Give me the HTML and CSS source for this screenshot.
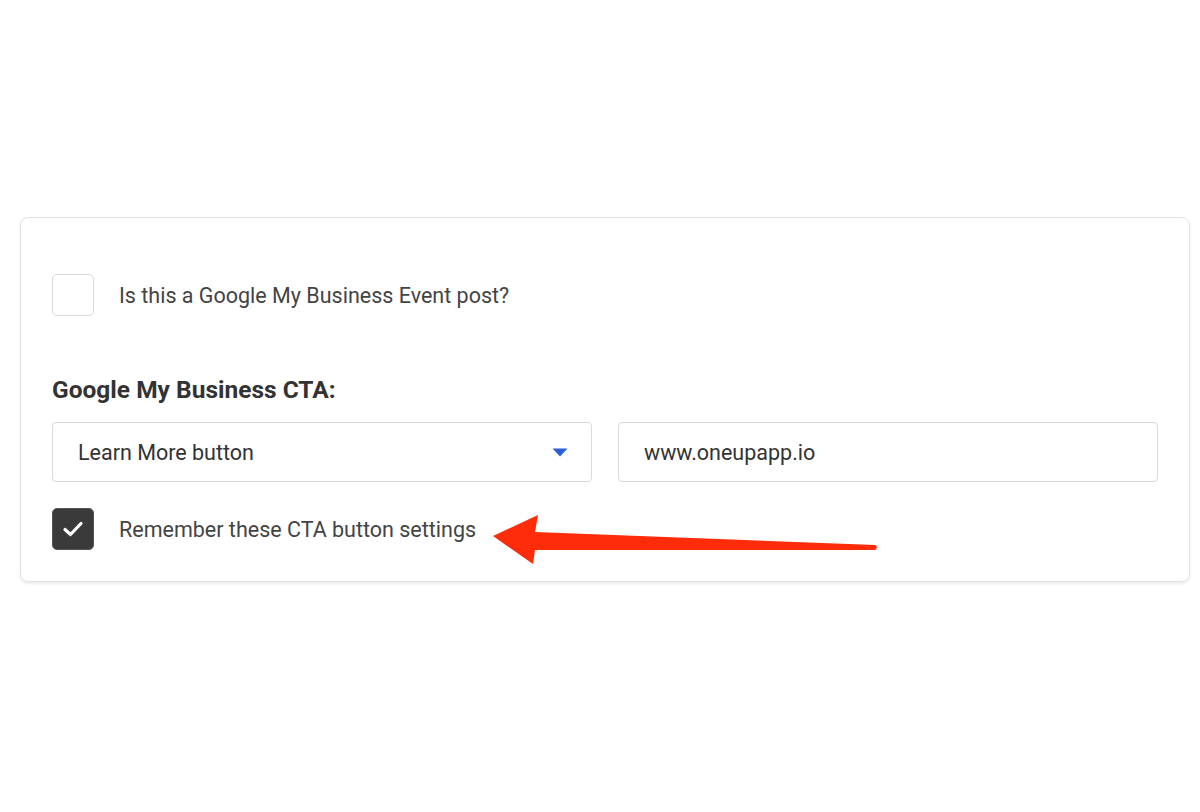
FILE: index.html
```html
<!DOCTYPE html>
<html>
<head>
<meta charset="utf-8">
<link rel="stylesheet" href="styles.css">
</head>
<body>
<div class="page">
  <div class="card">
    <label class="check-row first">
      <span class="box"></span>
      <span class="check-label">Is this a Google My Business Event post?</span>
    </label>
    <h2 class="heading">Google My Business CTA:</h2>
    <div class="fields">
      <div class="field select">
        <span>Learn More button</span>
        <svg class="caret" width="16" height="9" viewBox="0 0 16 9"><path d="M0.5 0.5 H15.5 L8 8.5 Z" fill="#2b5fd9"/></svg>
      </div>
      <div class="field input"><span>www.oneupapp.io</span></div>
    </div>
    <label class="check-row">
      <span class="box checked">
        <svg width="22" height="18" viewBox="0 0 22 18"><path d="M3 9.5 L8.5 14.5 L19 3.5" fill="none" stroke="#fff" stroke-width="3.2" stroke-linecap="round" stroke-linejoin="round"/></svg>
      </span>
      <span class="check-label">Remember these CTA button settings</span>
    </label>
  </div>
  <svg class="arrow" width="400" height="60" viewBox="0 0 400 60">
    <path d="M2 28 L47 7 L44 24 L384 37 Q388 39 384 42 L44 42 L42 56 Z" fill="#ff2c0a"/>
  </svg>
</div>
</body>
</html>
```
FILE: styles.css
```css
html, body {
  margin: 0;
  padding: 0;
  background: #fff;
}
body {
  font-family: Roboto, "Liberation Sans", sans-serif;
  color: #444;
}
.page {
  position: relative;
  width: 1200px;
  height: 812px;
  padding-top: 217px;
  box-sizing: border-box;
}
.card {
  margin: 0 10px 0 20px;
  border: 1px solid #e2e2e2;
  border-radius: 8px;
  box-shadow: 0 2px 3px rgba(0,0,0,0.08);
  padding: 56px 31px 31px 31px;
  display: flex;
  flex-direction: column;
}
.check-row {
  display: flex;
  align-items: center;
  gap: 25px;
}
.box {
  width: 40px;
  height: 40px;
  border: 1px solid #d9d9d9;
  border-radius: 5px;
  box-sizing: content-box;
  display: flex;
  align-items: center;
  justify-content: center;
  flex: none;
}
.box.checked {
  background: #3a3a3a;
  border-color: #555;
}
.check-label {
  font-size: 21.5px;
  color: #444;
}
.heading {
  margin: 58px 0 0 0;
  font-size: 24.5px;
  font-weight: 700;
  color: #333;
  line-height: 32px;
}
.fields {
  margin-top: 16px;
  display: flex;
  gap: 26px;
}
.field {
  flex: 1;
  height: 58px;
  border: 1px solid #d9d9d9;
  border-radius: 4px;
  display: flex;
  align-items: center;
  padding: 0 24px 0 25px;
  font-size: 21.5px;
  color: #333;
  justify-content: space-between;
}
.caret {
  display: block;
  margin-right: -1px;
}
.fields + .check-row {
  margin-top: 26px;
}
.arrow {
  position: absolute;
  left: 491px;
  top: 508px;
}
```
